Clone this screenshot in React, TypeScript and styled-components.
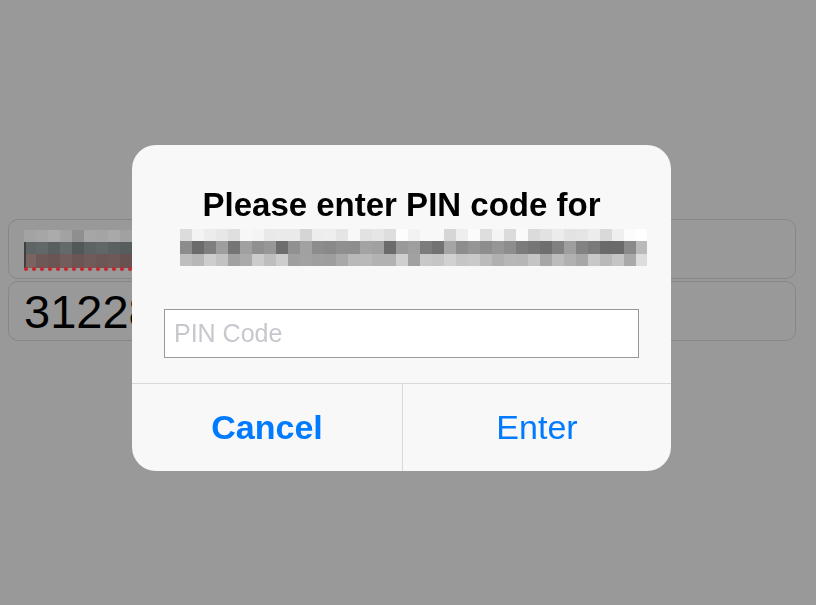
import React from 'react';
import styled, { createGlobalStyle } from 'styled-components';

const GlobalStyle = createGlobalStyle`
    html, body {
        margin: 0;
        padding: 0;
        background: #999999;
        font-family: "Liberation Sans", Arial, sans-serif;
    }
`;

const Page = styled.div`
    min-height: 605px;
    padding: 219px 20px 0 8px;
    box-sizing: border-box;
    display: flex;
    flex-direction: column;
    gap: 2px;
`;

const Field = styled.div<{ $h: number }>`
    height: ${p => p.$h}px;
    box-sizing: border-box;
    border: 1px solid #878787;
    border-radius: 10px;
    padding: 0 0 0 15px;
    display: flex;
    align-items: center;
    font-size: 47px;
    color: #000;
    overflow: hidden;
`;

const FieldRedacted = styled.svg`
    display: block;
    margin-top: 4px;
`;

const Overlay = styled.div`
    position: fixed;
    inset: 0;
    display: flex;
    align-items: flex-start;
    padding: 145px 0 0 132px;
`;

const Alert = styled.div`
    width: 539px;
    height: 326px;
    background: #f8f8f8;
    border-radius: 24px;
    display: flex;
    flex-direction: column;
    overflow: hidden;
`;

const Title = styled.div`
    margin-top: 40px;
    text-align: center;
    font-size: 33px;
    line-height: 40px;
    font-weight: 700;
    color: #000;
`;

const Redacted = styled.svg`
    display: block;
    margin: 4px 0 0 48px;
`;

const PinInput = styled.input`
    margin: 43px 32px 0;
    height: 49px;
    box-sizing: border-box;
    border: 1px solid #9d9896;
    background: #fff;
    padding: 0 0 0 9px;
    font-family: "Liberation Sans", Arial, sans-serif;
    font-size: 25px;
    outline: none;
    &::placeholder {
        color: #c7c7cd;
    }
`;

const Actions = styled.div`
    margin-top: 25px;
    flex: 1;
    display: grid;
    grid-template-columns: 270px 1fr;
    border-top: 1px solid #d9d9d9;
`;

const ActionButton = styled.button<{ $bold?: boolean }>`
    border: none;
    background: transparent;
    color: #007aff;
    font-family: "Liberation Sans", Arial, sans-serif;
    font-size: 34px;
    font-weight: ${p => (p.$bold ? 700 : 400)};
    display: flex;
    align-items: center;
    justify-content: center;
    padding: 0;
    & + & {
        border-left: 1px solid #d9d9d9;
    }
`;

// deterministic noise for the pixelated (redacted) text
const noise = (i: number) => {
    const x = Math.sin(i * 12.9898 + 78.233) * 43758.5453;
    return x - Math.floor(x);
};

const grey = (v: number) => `rgb(${v},${v},${v})`;

const DialogMosaic = () => {
    const cols = 39;
    const rows = [
        { y: 0, h: 12, min: 212, span: 42 },
        { y: 12, h: 13, min: 105, span: 60 },
        { y: 25, h: 12, min: 155, span: 55 },
    ];
    return (
        <Redacted width={467} height={37} viewBox="0 0 467 37" shapeRendering="crispEdges">
            {rows.map((r, ri) =>
                Array.from({ length: cols }).map((_, c) => {
                    let v = Math.round(r.min + noise(ri * 100 + c) * r.span);
                    if (c === cols - 1) v = Math.min(255, v + 50);
                    return <rect key={`${ri}-${c}`} x={c * 12} y={r.y} width={12} height={r.h} fill={grey(v)} />;
                })
            )}
        </Redacted>
    );
};

const FieldMosaic = () => {
    const top = ['#a3a3a3', '#a6a6a6', '#ababab', '#a2a2a2', '#8f8f8f', '#a6a6a6', '#a4a4a4', '#a9a9a9', '#a1a1a1', '#a5a5a5'];
    const mid = ['#5f6565', '#626868', '#595f5f', '#646a6a', '#525858', '#5d6363', '#616767', '#5b6161', '#575d5d', '#636969'];
    const low = ['#7a6462', '#6e5857', '#6a5454', '#735d5c', '#6b5655', '#715b5a', '#6d5756', '#6f5958', '#685251', '#745e5d'];
    return (
        <FieldRedacted width={115} height={42} viewBox="0 0 115 42">
            <g shapeRendering="crispEdges">
                {top.map((c, i) => <rect key={`t${i}`} x={i * 12} y={0} width={12} height={12} fill={c} />)}
                {mid.map((c, i) => <rect key={`m${i}`} x={i * 12} y={12} width={12} height={12} fill={c} />)}
                {low.map((c, i) => <rect key={`l${i}`} x={i * 12} y={24} width={12} height={14} fill={c} />)}
                <rect x={0} y={12} width={2} height={26} fill="#3f3f3f" />
            </g>
            {Array.from({ length: 15 }).map((_, i) => (
                <circle key={`d${i}`} cx={2 + i * 8} cy={39} r={2} fill="#c4262b" />
            ))}
        </FieldRedacted>
    );
};

const App = () => {
    return (
        <>
            <GlobalStyle />
            <Page>
                <Field $h={60}>
                    <FieldMosaic />
                </Field>
                <Field $h={60}>31228</Field>
            </Page>
            <Overlay>
                <Alert>
                    <Title>Please enter PIN code for</Title>
                    <DialogMosaic />
                    <PinInput placeholder="PIN Code" type="password" />
                    <Actions>
                        <ActionButton $bold>Cancel</ActionButton>
                        <ActionButton>Enter</ActionButton>
                    </Actions>
                </Alert>
            </Overlay>
        </>
    );
};

export default App;
